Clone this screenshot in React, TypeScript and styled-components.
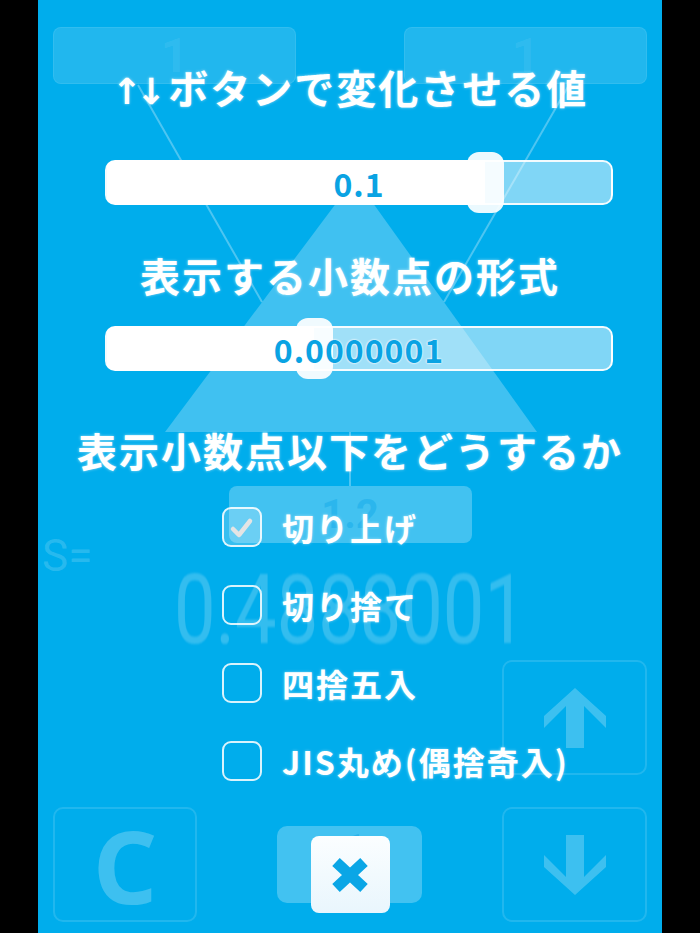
import React, { FC } from 'react';
import styled, { createGlobalStyle } from 'styled-components';

const GlobalStyle = createGlobalStyle`
  html,
  body {
    margin: 0;
    background: #000;
  }
`;

const Screen = styled.div`
  position: relative;
  width: 624px;
  height: 933px;
  margin: 0 auto;
  background: #00adec;
  overflow: hidden;
`;

/* ---- the calculator behind the settings sheet ---- */

const Calc = styled.div`
  display: flex;
  flex-direction: column;
  padding-top: 27px;
  font-family: Roboto, 'Noto Sans CJK JP', sans-serif;
`;

const TopRow = styled.div`
  display: flex;
  justify-content: space-between;
  padding: 0 15px;
`;

const Operand = styled.div<{ $mid?: boolean }>`
  width: 243px;
  height: 57px;
  box-sizing: border-box;
  display: flex;
  align-items: center;
  justify-content: center;
  border: 1px solid rgba(255, 255, 255, ${(p) => (p.$mid ? 0 : 0.08)});
  border-radius: 8px;
  background: rgba(255, 255, 255, ${(p) => (p.$mid ? 0.26 : 0.13)});
  color: ${(p) => (p.$mid ? 'rgba(0, 160, 230, 0.35)' : 'rgba(255, 255, 255, 0.08)')};
  font-size: ${(p) => (p.$mid ? 40 : 48)}px;
  font-weight: 700;
`;

const Diagram = styled.svg`
  display: block;
  width: 624px;
  height: 402px;
`;

const MidRow = styled.div`
  display: flex;
  justify-content: center;
`;

const ResultLabel = styled.div`
  padding-left: 4px;
  font-size: 44px;
  line-height: 27px;
  height: 27px;
  color: rgba(255, 255, 255, 0.16);
`;

const ResultValue = styled.div`
  text-align: center;
  font-size: 96px;
  line-height: 80px;
  height: 80px;
  color: rgba(255, 255, 255, 0.2);
  transform: scaleX(0.77);
  filter: blur(1px);
`;

const Keys = styled.div`
  display: grid;
  grid-template-columns: 144px 145px 145px;
  grid-template-rows: 115px 115px;
  column-gap: 80px;
  row-gap: 32px;
  margin-top: 10px;
  padding: 0 15px;
`;

const Key = styled.div<{ $col?: number }>`
  grid-column: ${(p) => p.$col ?? 'auto'};
  display: flex;
  align-items: center;
  justify-content: center;
  box-sizing: border-box;
  border: 2px solid rgba(255, 255, 255, 0.13);
  border-radius: 10px;
  color: rgba(255, 255, 255, 0.24);
  font-family: 'Noto Sans', sans-serif;
  font-size: 100px;
  font-weight: 700;
`;

const MidKey = styled.div`
  align-self: center;
  height: 77px;
  display: flex;
  justify-content: center;
  overflow: visible;
  border-radius: 10px;
  background: rgba(255, 255, 255, 0.26);
  color: rgba(0, 150, 220, 0.35);
  font-size: 90px;
  font-weight: 700;
  line-height: 86px;
`;

const Arrow: FC<{ down?: boolean }> = ({ down }) => (
  <svg width="62" height="60" viewBox="0 0 62 60" style={down ? undefined : { transform: 'scaleY(-1)' }}>
    <path d="M22 0H40V42L62 20V32L31 60L0 32V20L22 42Z" fill="rgba(255,255,255,0.24)" />
  </svg>
);

/* ---- settings sheet ---- */

const Sheet = styled.div`
  position: absolute;
  inset: 0;
  display: flex;
  flex-direction: column;
  align-items: center;
  padding-top: 65px;
  font-family: 'Noto Sans CJK JP', sans-serif;
  color: #fff;
`;

const Title = styled.div<{ $gap: number }>`
  margin-top: ${(p) => p.$gap}px;
  height: 44px;
  font-size: 40px;
  line-height: 44px;
  font-weight: 700;
  letter-spacing: 2px;
  white-space: nowrap;
  text-shadow: 0 0 3px rgba(255, 255, 255, 0.6);
`;

const Arrows = styled.span`
  font-family: 'DejaVu Sans', sans-serif;
  font-weight: 700;
  font-size: 36px;
  letter-spacing: -6px;
  margin-right: 8px;
`;

const Slider = styled.div<{ $gap: number }>`
  align-self: flex-start;
  position: relative;
  width: 508px;
  height: 45px;
  margin: ${(p) => p.$gap}px 0 0 67px;
  box-sizing: border-box;
  border: 2px solid rgba(255, 255, 255, 0.9);
  border-radius: 10px;
`;

const Handle = styled.div`
  position: absolute;
  top: -10px;
  width: 37px;
  height: 61px;
  margin-left: -18px;
  border-radius: 12px;
  background: rgba(255, 255, 255, 0.92);
`;

const SliderValue = styled.div`
  position: relative;
  display: flex;
  align-items: center;
  justify-content: center;
  height: 100%;
  font-size: 32px;
  font-weight: 700;
  letter-spacing: 1px;
  color: #0aa3e3;
  text-shadow: 0 0 2px #fff, 0 0 2px #fff;
`;

const Options = styled.div<{ $gap: number }>`
  align-self: flex-start;
  display: flex;
  flex-direction: column;
  gap: 38px;
  margin: ${(p) => p.$gap}px 0 0 184px;
`;

const Option = styled.div`
  display: flex;
  align-items: center;
  gap: 20px;
  height: 40px;
  font-size: 32px;
  font-weight: 700;
  letter-spacing: 2px;
  white-space: nowrap;
  text-shadow: 0 0 3px rgba(255, 255, 255, 0.5);
`;

const Box = styled.div<{ $checked?: boolean }>`
  flex: none;
  width: 40px;
  height: 40px;
  box-sizing: border-box;
  border: 2px solid rgba(255, 255, 255, 0.85);
  border-radius: 9px;
  background: ${(p) => (p.$checked ? 'rgba(255, 255, 255, 0.22)' : 'transparent')};
`;

const Close = styled.button`
  margin-top: 55px;
  width: 79px;
  height: 77px;
  display: flex;
  align-items: center;
  justify-content: center;
  padding: 0;
  border: 0;
  border-radius: 8px;
  background: linear-gradient(#fbfeff, #e9f6fd);
`;

const SettingSlider: FC<{ pos: number; value: string; gap: number }> = ({ pos, value, gap }) => (
  <Slider
    $gap={gap}
    style={{
      background: `linear-gradient(to right, #fff ${pos}%, rgba(255,255,255,0.5) ${pos}%)`,
    }}
  >
    <Handle style={{ left: `${pos}%` }} />
    <SliderValue>{value}</SliderValue>
  </Slider>
);

const options = ['切り上げ', '切り捨て', '四捨五入', 'JIS丸め(偶捨奇入)'];

const App: FC = () => (
  <>
    <GlobalStyle />
    <Screen>
      <Calc>
        <TopRow>
          <Operand>1</Operand>
          <Operand>1</Operand>
        </TopRow>
        <Diagram viewBox="0 0 624 402">
          <polygon points="317,94 127,348 499,348" fill="rgba(255,255,255,0.25)" />
          <g stroke="rgba(255,255,255,0.3)" strokeWidth="2">
            <line x1="100" y1="1" x2="224" y2="218" />
            <line x1="531" y1="1" x2="406" y2="218" />
            <line x1="312" y1="348" x2="312" y2="402" />
          </g>
        </Diagram>
        <MidRow>
          <Operand $mid>1.2</Operand>
        </MidRow>
        <ResultLabel>S=</ResultLabel>
        <ResultValue>0.4888001</ResultValue>
        <Keys>
          <Key $col={3}>
            <Arrow />
          </Key>
          <Key>C</Key>
          <MidKey>1</MidKey>
          <Key>
            <Arrow down />
          </Key>
        </Keys>
      </Calc>

      <Sheet>
        <Title $gap={0}>
          <Arrows>↑↓</Arrows>ボタンで変化させる値
        </Title>
        <SettingSlider gap={51} pos={75} value="0.1" />
        <Title $gap={48}>表示する小数点の形式</Title>
        <SettingSlider gap={29} pos={41} value="0.0000001" />
        <Title $gap={57}>表示小数点以下をどうするか</Title>
        <Options $gap={35}>
          {options.map((label, i) => (
            <Option key={label}>
              <Box $checked={i === 0}>
                {i === 0 && (
                  <svg width="36" height="36" viewBox="0 0 36 36">
                    <path d="M9 19L15 25L26 11" fill="none" stroke="#e4e4e4" strokeWidth="4.5" strokeLinecap="round" strokeLinejoin="round" />
                  </svg>
                )}
              </Box>
              {label}
            </Option>
          ))}
        </Options>
        <Close aria-label="閉じる">
          <svg width="38" height="36" viewBox="0 0 38 36">
            <path d="M5 5L33 31M33 5L5 31" stroke="#0aa6e6" strokeWidth="11" />
          </svg>
        </Close>
      </Sheet>
    </Screen>
  </>
);

export default App;
